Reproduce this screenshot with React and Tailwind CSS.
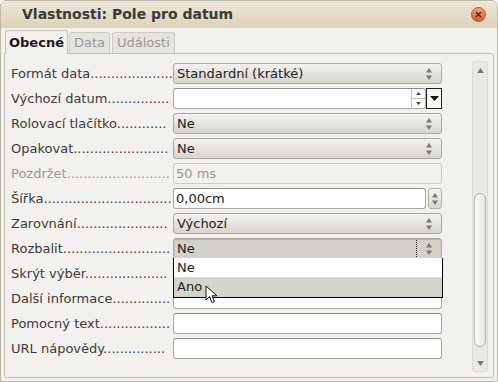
import React from "react";

const font = { fontFamily: '"DejaVu Sans", "Liberation Sans", sans-serif' };

function Arrows() {
  const c = "#7a7873";
  return (
    <svg width="8" height="14" viewBox="0 0 8 14">
      <path d="M4 1 L7 5.5 L1 5.5 Z" fill={c} />
      <path d="M4 13 L7 8.5 L1 8.5 Z" fill={c} />
    </svg>
  );
}

function Combo({ text, pressed }) {
  return (
    <div
      className={
        "h-[21px] flex-1 flex items-center rounded-[3px] border border-[#aaa79e] " +
        (pressed
          ? "bg-[#d4d1c8] shadow-[inset_0_1px_1px_rgba(0,0,0,0.15)]"
          : "bg-gradient-to-b from-[#f3f2ef] to-[#d8d5cc]")
      }
    >
      <div
        className={
          "flex-1 h-[17px] flex items-center pl-[3px] text-[13px] text-[#222] leading-none " +
          (pressed ? "border-r border-dotted border-[#222]" : "")
        }
      >
        {text}
      </div>
      <div className="w-[24px] flex justify-center">
        <Arrows />
      </div>
    </div>
  );
}

function Entry({ text, disabled, children }) {
  return (
    <div
      className={
        "h-[21px] flex-1 flex items-center rounded-[3px] border " +
        (disabled
          ? "bg-[#f2f1ed] border-[#ccc9c1] text-[#9a9892]"
          : "bg-white border-[#a9a79f] border-t-[#8e8c85] text-[#222]")
      }
    >
      <div className="flex-1 pl-[2px] text-[13px] leading-none">{text}</div>
      {children}
    </div>
  );
}

function Row({ label, dots, disabled, children }) {
  return (
    <div className="h-[25px] flex items-start">
      <div
        className={
          "w-[162px] h-[21px] flex items-center whitespace-nowrap text-[13px] " +
          (disabled ? "text-[#9a9892]" : "text-[#3a3a3a]")
        }
      >
        {label + ".".repeat(dots)}
      </div>
      <div className="w-[269px] flex">{children}</div>
    </div>
  );
}

export default function App() {
  return (
    <div
      className="w-[498px] h-[382px] bg-[#f2f1ed] relative overflow-hidden border border-[#bdb8a8] rounded-t-[6px]"
      style={font}
    >
      {/* Title bar */}
      <div className="h-[27px] bg-gradient-to-b from-[#ede7d6] to-[#dcd3ba] flex items-center justify-between pl-[21px] pr-[11px]">
        <span className="text-[14px] font-bold text-[#3a3a3a]">
          Vlastnosti: Pole pro datum
        </span>
        <div className="w-[15px] h-[15px] rounded-full bg-gradient-to-b from-[#f4a07a] to-[#d85a2a] border border-[#c05024] flex items-center justify-center">
          <svg width="7" height="7" viewBox="0 0 7 7">
            <path d="M1 1 L6 6 M6 1 L1 6" stroke="#5a2412" strokeWidth="1.5" />
          </svg>
        </div>
      </div>

      {/* Tabs */}
      <div className="flex items-end h-[25px] pl-[4px]">
        <div className="h-[24px] px-[3px] flex items-center bg-[#f2f1ed] border border-b-0 border-[#c3c0b6] rounded-t-[3px] text-[13px] font-bold text-[#1a1a1a] relative z-10 mb-[-1px]">
          Obecné
        </div>
        <div className="h-[21px] ml-[1px] px-[4px] flex items-center bg-[#e6e4de] border border-b-0 border-[#cdcac1] rounded-t-[3px] text-[13px] text-[#9a9892]">
          Data
        </div>
        <div className="h-[21px] ml-[2px] px-[4px] flex items-center bg-[#e6e4de] border border-b-0 border-[#cdcac1] rounded-t-[3px] text-[13px] text-[#9a9892]">
          Události
        </div>
      </div>

      {/* Panel */}
      <div className="absolute left-[3px] right-[3px] top-[52px] bottom-[3px] border border-[#c3c0b6] rounded-[3px] rounded-tl-none flex">
        <div className="pl-[6px] pt-[9px] w-[440px] relative">
          <Row label="Formát data" dots={20}>
            <Combo text="Standardní (krátké)" />
          </Row>
          <Row label="Výchozí datum" dots={15}>
            <Entry text="">
              <div className="w-[14px] h-[19px] flex flex-col border-l border-[#c8c6bf]">
                <div className="flex-1 flex items-center justify-center border-b border-[#c8c6bf]">
                  <svg width="5" height="3" viewBox="0 0 5 3">
                    <path d="M2.5 0 L5 3 L0 3 Z" fill="#444" />
                  </svg>
                </div>
                <div className="flex-1 flex items-center justify-center">
                  <svg width="5" height="3" viewBox="0 0 5 3">
                    <path d="M2.5 3 L5 0 L0 0 Z" fill="#444" />
                  </svg>
                </div>
              </div>
            </Entry>
            <div className="w-[16px] h-[21px] border border-[#222] bg-[#f7f6f3] flex items-center justify-center">
              <svg width="9" height="5" viewBox="0 0 9 5">
                <path d="M0 0 L9 0 L4.5 5 Z" fill="#111" />
              </svg>
            </div>
          </Row>
          <Row label="Rolovací tlačítko" dots={12}>
            <Combo text="Ne" />
          </Row>
          <Row label="Opakovat" dots={23}>
            <Combo text="Ne" />
          </Row>
          <Row label="Pozdržet" dots={25} disabled>
            <Entry text="50 ms" disabled />
          </Row>
          <Row label="Šířka" dots={31}>
            <Entry text="0,00cm" />
            <div className="ml-[2px] w-[14px] h-[21px] rounded-[3px] border border-[#b3b0a7] bg-gradient-to-b from-[#f3f2ef] to-[#dcd9d1] flex items-center justify-center">
              <Arrows />
            </div>
          </Row>
          <Row label="Zarovnání" dots={22}>
            <Combo text="Výchozí" />
          </Row>
          <Row label="Rozbalit" dots={26}>
            <Combo text="Ne" pressed />
          </Row>
          <Row label="Skrýt výběr" dots={20}>
            <Entry text="" />
          </Row>
          <Row label="Další informace" dots={14}>
            <Entry text="" />
          </Row>
          <Row label="Pomocný text" dots={17}>
            <Entry text="" />
          </Row>
          <Row label="URL nápovědy" dots={15}>
            <Entry text="" />
          </Row>

          {/* Popup list */}
          <div className="absolute left-[168px] top-[204px] w-[270px] border border-t-0 border-black bg-white text-[13px] text-[#222]">
            <div className="h-[19px] flex items-center pl-[3px]">Ne</div>
            <div className="h-[20px] flex items-center pl-[3px] bg-[#d6d3cb]">Ano</div>
          </div>

          {/* Cursor */}
          <svg
            className="absolute left-[200px] top-[231px]"
            width="14"
            height="19"
            viewBox="0 0 14 19"
          >
            <path
              d="M1 1 L1 15 L4.5 11.5 L7 17.5 L9.5 16.5 L7 10.8 L12 10.8 Z"
              fill="#fff"
              stroke="#111"
              strokeWidth="1"
              strokeLinejoin="round"
            />
          </svg>
        </div>

        {/* Scrollbar */}
        <div className="ml-[27px] mt-[7px] mb-[5px] w-[16px] flex flex-col border border-[#dcdad3] bg-[#ebe9e3] rounded-[2px]">
          <div className="h-[16px] flex items-center justify-center">
            <svg width="7" height="5" viewBox="0 0 7 5">
              <path d="M3.5 0 L7 5 L0 5 Z" fill="#7a7873" />
            </svg>
          </div>
          <div className="flex-1 flex flex-col px-[1px]">
            <div className="h-[115px]" />
            <div className="flex-1 rounded-[7px] border border-[#b8b5ac] bg-gradient-to-r from-[#fbfaf8] to-[#e8e6e0] mb-[8px]" />
          </div>
          <div className="h-[16px] flex items-center justify-center">
            <svg width="7" height="5" viewBox="0 0 7 5">
              <path d="M3.5 5 L7 0 L0 0 Z" fill="#7a7873" />
            </svg>
          </div>
        </div>
      </div>
    </div>
  );
}
